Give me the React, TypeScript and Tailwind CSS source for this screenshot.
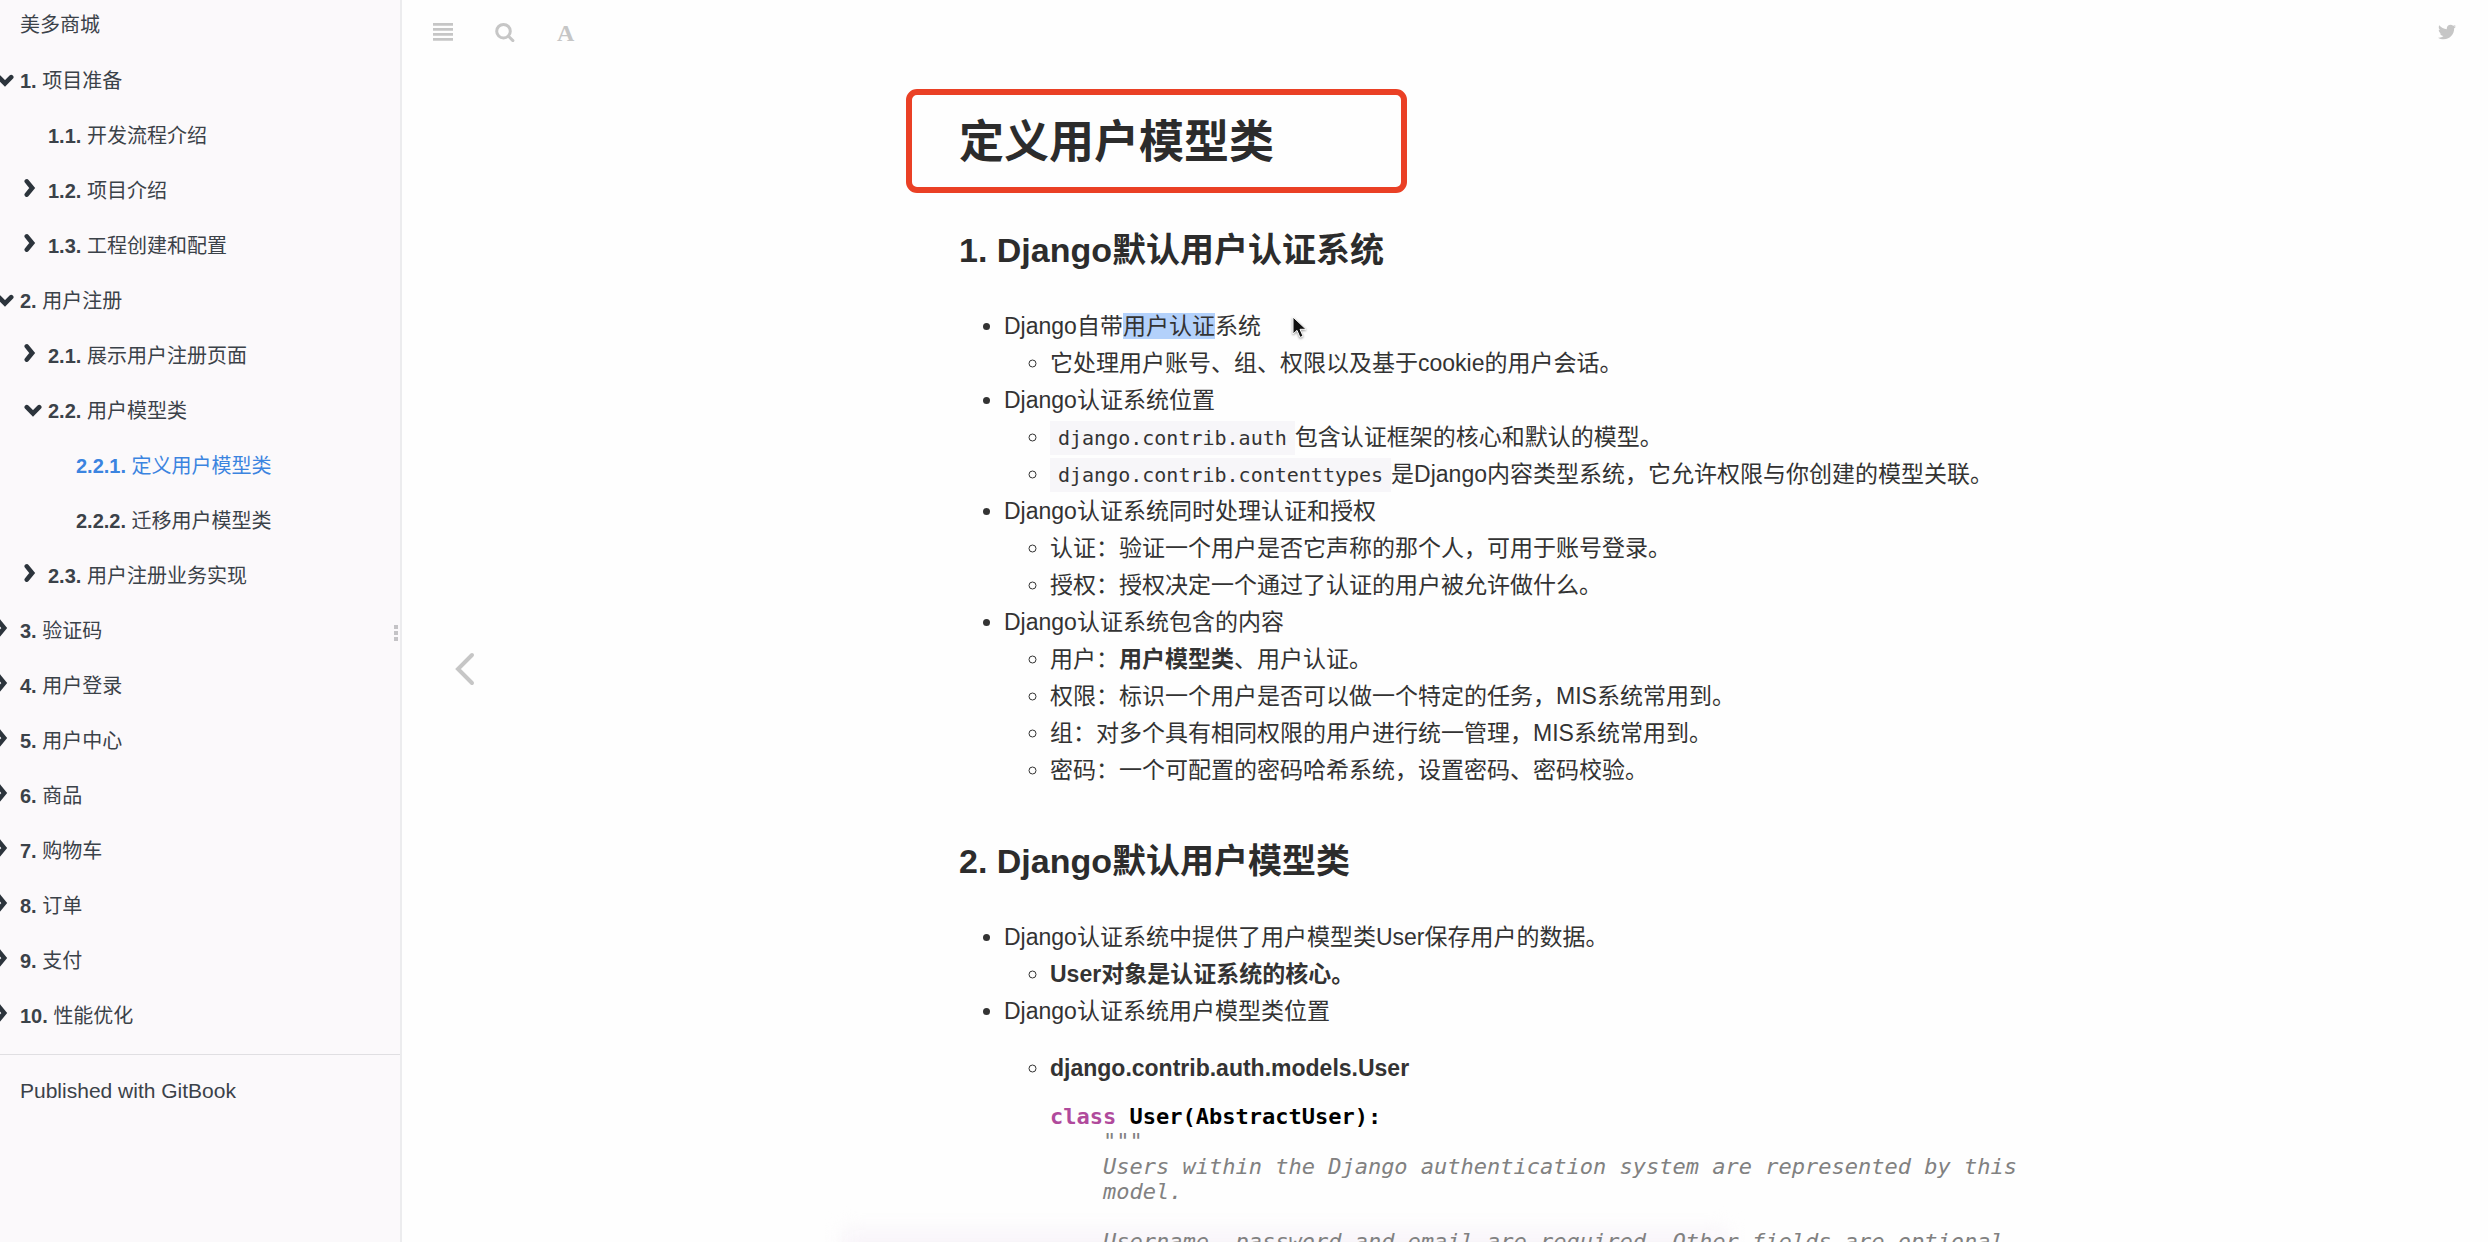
import type { ReactNode } from "react";
import { FaTwitter } from "react-icons/fa";

type Entry = {
  level: string;
  title: string;
  depth: 0 | 1 | 2;
  state?: "open" | "closed";
  active?: boolean;
};

const entries: Entry[] = [
  { level: "1.", title: "项目准备", depth: 0, state: "open" },
  { level: "1.1.", title: "开发流程介绍", depth: 1 },
  { level: "1.2.", title: "项目介绍", depth: 1, state: "closed" },
  { level: "1.3.", title: "工程创建和配置", depth: 1, state: "closed" },
  { level: "2.", title: "用户注册", depth: 0, state: "open" },
  { level: "2.1.", title: "展示用户注册页面", depth: 1, state: "closed" },
  { level: "2.2.", title: "用户模型类", depth: 1, state: "open" },
  { level: "2.2.1.", title: "定义用户模型类", depth: 2, active: true },
  { level: "2.2.2.", title: "迁移用户模型类", depth: 2 },
  { level: "2.3.", title: "用户注册业务实现", depth: 1, state: "closed" },
  { level: "3.", title: "验证码", depth: 0, state: "closed" },
  { level: "4.", title: "用户登录", depth: 0, state: "closed" },
  { level: "5.", title: "用户中心", depth: 0, state: "closed" },
  { level: "6.", title: "商品", depth: 0, state: "closed" },
  { level: "7.", title: "购物车", depth: 0, state: "closed" },
  { level: "8.", title: "订单", depth: 0, state: "closed" },
  { level: "9.", title: "支付", depth: 0, state: "closed" },
  { level: "10.", title: "性能优化", depth: 0, state: "closed" },
];

const indent = ["pl-5", "pl-12", "pl-[76px]"];

function Chevron({ state }: { state: "open" | "closed" }) {
  return state === "open" ? (
    <svg
      viewBox="0 0 18 14"
      className="h-[14px] w-[18px]"
      fill="none"
      stroke="currentColor"
      strokeWidth="4.6"
      strokeLinecap="round"
    >
      <path d="M2.8 3.2L9 9.4l6.2-6.2" />
    </svg>
  ) : (
    <svg
      viewBox="0 0 12 20"
      className="mb-1.5 h-5 w-3"
      fill="none"
      stroke="currentColor"
      strokeWidth="4.6"
      strokeLinecap="round"
    >
      <path d="M2.8 3.4l5.4 6.6-5.4 6.6" />
    </svg>
  );
}

function SidebarItem({ entry }: { entry: Entry }) {
  return (
    <li className={`relative flex h-[55px] items-center ${indent[entry.depth]}`}>
      {entry.state && (
        <button
          type="button"
          aria-label={`${entry.level} ${entry.title}`}
          className={`absolute inset-y-0 flex items-center text-[#2c343c] ${entry.depth === 0 ? "-left-1" : "left-6"}`}
        >
          <Chevron state={entry.state} />
        </button>
      )}
      <a href="#" className={entry.active ? "text-[#3b84e0]" : ""}>
        <b>{entry.level}</b> {entry.title}
      </a>
    </li>
  );
}

function Item({ children, sub }: { children: ReactNode; sub?: ReactNode }) {
  return (
    <li>
      {children}
      {sub && <ul className="list-[circle] pl-[46px]">{sub}</ul>}
    </li>
  );
}

function Code({ children }: { children: ReactNode }) {
  return (
    <code className="bg-[#f7f6f9] px-2 py-[5px] font-['DejaVu_Sans_Mono',monospace] text-xl leading-6">{children}</code>
  );
}

const docstring = `    Users within the Django authentication system are represented by this
    model.

    Username, password and email are required. Other fields are optional.`;

export default function App() {
  return (
    <div className="flex h-screen overflow-hidden bg-[#fefefe] font-['Liberation_Sans','Noto_Sans_CJK_SC',sans-serif]">
      <nav className="relative w-[402px] shrink-0 border-r-2 border-[#ececee] bg-[#fbf9fb] text-xl leading-[28px] text-[#3b4249]">
        <ul>
          <li className="flex h-[53px] items-center pb-1 pl-5">
            <a href="#">美多商城</a>
          </li>
          {entries.map((entry) => (
            <SidebarItem key={entry.level} entry={entry} />
          ))}
        </ul>
        <div className="mt-[11px] flex h-[72px] items-center border-t border-[#e0dfe2] pl-5">
          <a href="#" className="text-[21px]">
            Published with GitBook
          </a>
        </div>
        <div className="absolute right-0.5 top-1/2 flex flex-col gap-0.5 pt-1">
          <span className="size-1 bg-[#c4c3c6]" />
          <span className="size-1 bg-[#c4c3c6]" />
          <span className="size-1 bg-[#c4c3c6]" />
        </div>
      </nav>

      <main className="relative min-w-0 flex-1 overflow-hidden">
        <header className="flex h-16 items-center text-[#c6c6c6]">
          <button type="button" aria-label="Toggle summary" className="ml-[31px]">
            <svg viewBox="0 0 20 18" className="h-[18px] w-5" fill="currentColor">
              <path d="M0 0h20v2.8H0zM0 5h20v2.8H0zM0 10h20v2.8H0zM0 15h20v2.8H0z" />
            </svg>
          </button>
          <button type="button" aria-label="Search" className="ml-[42px]">
            <svg viewBox="0 0 20 20" className="size-5" fill="none" stroke="currentColor" strokeWidth="3">
              <circle cx="8.5" cy="9.2" r="6.8" />
              <path d="M13.5 14.2l4.4 4.4" strokeLinecap="round" />
            </svg>
          </button>
          <button
            type="button"
            aria-label="Font settings"
            className="ml-[42px] pt-0.5 font-['Liberation_Serif',serif] text-2xl font-bold leading-6"
          >
            A
          </button>
          <a href="#" aria-label="Twitter" className="ml-auto mr-8">
            <FaTwitter className="size-[18px]" />
          </a>
        </header>

        <a href="#" aria-label="Previous page" className="absolute left-[51px] top-[652px] text-[#c6c6c6]">
          <svg viewBox="0 0 22 34" className="h-[34px] w-[22px]" fill="none" stroke="currentColor" strokeWidth="4">
            <path d="M19 3L5 17l14 14" strokeLinecap="round" />
          </svg>
        </a>

        <div className="pointer-events-none absolute -bottom-5 left-[440px] right-[760px] h-8 bg-[#f8f4f9] blur-[10px]" />

        <article className="relative mx-auto max-w-[1220px] pl-[124px] pt-[47px] text-[23px] leading-[37px] text-[#333333]">
          <div className="relative">
            <h1 className="text-[45px] font-bold leading-[64px] text-[#2c2c2c]">定义用户模型类</h1>
            <div className="pointer-events-none absolute -left-[53px] -top-[22px] h-[104px] w-[501px] rounded-[11px] border-[6px] border-[#ea4025]" />
          </div>

          <h2 className="mt-[51px] text-[34px] font-bold leading-[48px] text-[#2c2c2c]">1. Django默认用户认证系统</h2>
          <div className="relative">
            <ul className="mt-[34px] list-disc pl-[45px]">
              <Item sub={<Item>它处理用户账号、组、权限以及基于cookie的用户会话。</Item>}>
                Django自带<mark className="bg-[#b3d1fb] text-inherit">用户认证</mark>系统
              </Item>
              <Item
                sub={
                  <>
                    <Item>
                      <Code>django.contrib.auth</Code>包含认证框架的核心和默认的模型。
                    </Item>
                    <Item>
                      <Code>django.contrib.contenttypes</Code>是Django内容类型系统，它允许权限与你创建的模型关联。
                    </Item>
                  </>
                }
              >
                Django认证系统位置
              </Item>
              <Item
                sub={
                  <>
                    <Item>认证：验证一个用户是否它声称的那个人，可用于账号登录。</Item>
                    <Item>授权：授权决定一个通过了认证的用户被允许做什么。</Item>
                  </>
                }
              >
                Django认证系统同时处理认证和授权
              </Item>
              <Item
                sub={
                  <>
                    <Item>
                      用户：<b>用户模型类</b>、用户认证。
                    </Item>
                    <Item>权限：标识一个用户是否可以做一个特定的任务，MIS系统常用到。</Item>
                    <Item>组：对多个具有相同权限的用户进行统一管理，MIS系统常用到。</Item>
                    <Item>密码：一个可配置的密码哈希系统，设置密码、密码校验。</Item>
                  </>
                }
              >
                Django认证系统包含的内容
              </Item>
            </ul>
            <svg
              viewBox="0 0 16 24"
              className="absolute left-[333px] top-2 h-6 w-4 drop-shadow-[0_1px_1px_#00000066]"
              fill="#111"
              stroke="#fff"
            >
              <path d="M1 1v17l4-3.6 3 7 3-1.3-3-6.8h6z" />
            </svg>
          </div>

          <h2 className="mt-12 text-[34px] font-bold leading-[48px] text-[#2c2c2c]">2. Django默认用户模型类</h2>
          <ul className="mt-[34px] list-disc pl-[45px]">
            <Item
              sub={
                <Item>
                  <b>User对象是认证系统的核心。</b>
                </Item>
              }
            >
              Django认证系统中提供了用户模型类User保存用户的数据。
            </Item>
            <li>
              Django认证系统用户模型类位置
              <ul className="mt-5 list-[circle] pl-[46px]">
                <li>
                  <b>django.contrib.auth.models.User</b>
                  <pre className="mt-[17px] font-['DejaVu_Sans_Mono',monospace] text-[22px] leading-[25px] text-[#818181]">
                    <b className="text-[#b04a9c]">class</b>
                    <b className="text-black"> User(AbstractUser):</b>
                    {'\n    """\n'}
                    <i>{docstring}</i>
                  </pre>
                </li>
              </ul>
            </li>
          </ul>
        </article>
      </main>
    </div>
  );
}
